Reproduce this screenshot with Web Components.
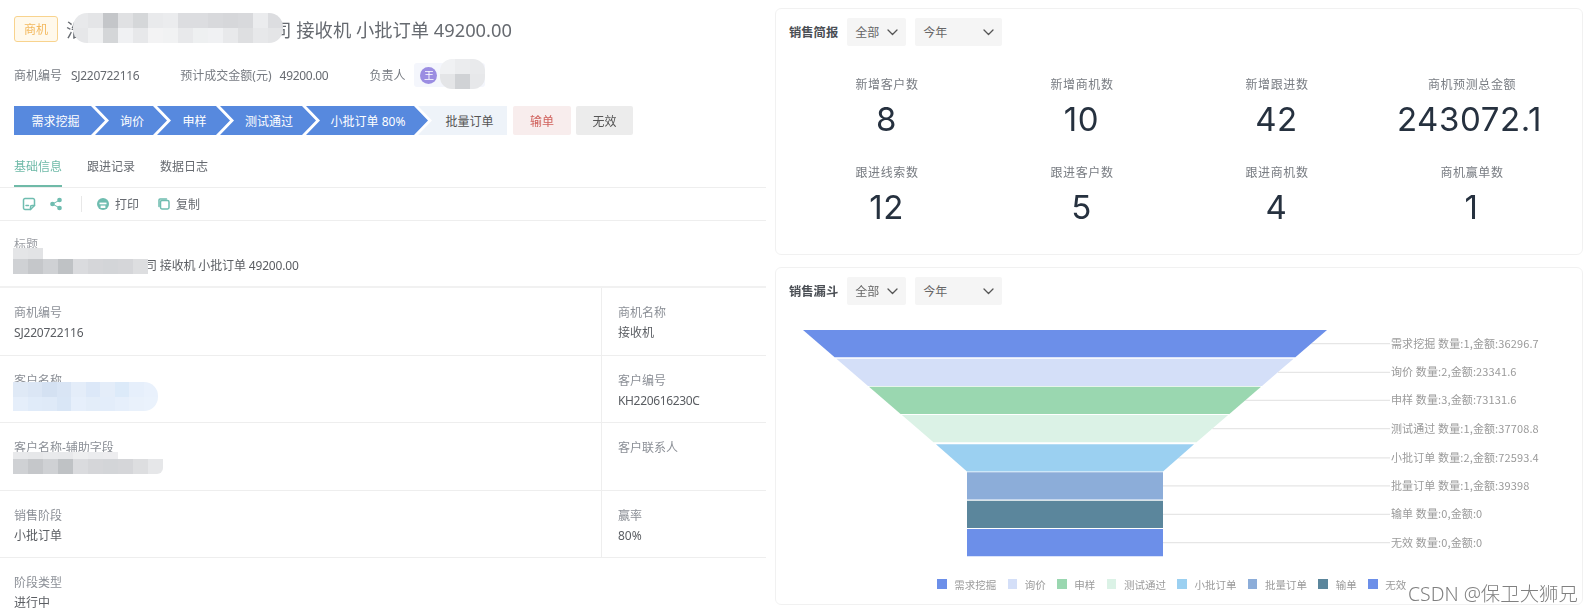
<!DOCTYPE html>
<html lang="zh-CN">
<head>
<meta charset="utf-8">
<title>商机详情与销售简报</title>
<style>
html,body{margin:0;padding:0;background:#fff;height:614px;overflow:hidden}
body{font-family:"Noto Sans","Noto Sans CJK SC",sans-serif;font-size:12px;color:#555}
</style>
</head>
<body>
<crm-page>
  <deal-detail slot="left"></deal-detail>
  <sales-brief slot="right"></sales-brief>
  <sales-funnel slot="right"></sales-funnel>
</crm-page>
<script>
const def=(name,html,init)=>customElements.define(name,class extends HTMLElement{
  constructor(){super();this.attachShadow({mode:'open'}).innerHTML=html}
  connectedCallback(){init&&init.call(this,this.shadowRoot)}
});

def('crm-page',`<style>
:host{display:grid;grid-template-columns:766px 808px;column-gap:9px;width:1594px;height:614px;overflow:hidden;filter:blur(.6px);position:relative}
.r{display:flex;flex-direction:column;gap:12px;padding-top:8px}
.wm{position:absolute;left:1408px;top:581px;font:300 19.4px "Noto Sans","Noto Sans CJK SC",sans-serif;color:#808080;white-space:nowrap;line-height:26px}
</style><div><slot name="left"></slot></div><div class="r"><slot name="right"></slot></div><div class="wm">CSDN @保卫大狮兄</div>`);

/* pixelated redaction patch */
def('mosaic-patch',`<style>
:host{display:inline-grid;vertical-align:top;overflow:hidden}
i{display:block}
</style>`,function(s){
  const c=+this.getAttribute('cell')||15,h=+this.getAttribute('rowh')||c;
  const rows=this.getAttribute('colors').split('|').map(r=>r.split(','));
  this.style.gridTemplateColumns=`repeat(${rows[0].length},${c}px)`;
  this.style.gridAutoRows=h+'px';
  rows.forEach(r=>r.forEach(k=>{const e=document.createElement('i');e.style.background=k==='-'?'transparent':'#'+k;s.appendChild(e)}));
});

def('stage-step',`<style>
:host{display:flex;align-items:center;justify-content:center;height:29px;font-size:12px;color:#fff;background:#5789de;margin-left:-10px;padding-left:2px;box-sizing:border-box;white-space:nowrap;
clip-path:polygon(0 0,calc(100% - 14px) 0,100% 50%,calc(100% - 14px) 100%,0 100%,14px 50%)}
:host([first]){margin-left:0;padding:0 8px 0 0;clip-path:polygon(0 0,calc(100% - 14px) 0,100% 50%,calc(100% - 14px) 100%,0 100%)}
:host([todo]){background:#eef3f9;color:#555;clip-path:polygon(0 0,100% 0,100% 100%,0 100%,14px 50%);padding-left:14px}
:host([lost]){margin-left:6px;background:#f8eded;color:#d0615c;clip-path:none;padding:0;border-radius:2px}
:host([void]){margin-left:5px;background:#ececec;color:#555;clip-path:none;padding:0;border-radius:2px}
</style><slot></slot>`);

def('field-cell',`<style>
:host{display:block;padding:16px 14px 0;box-sizing:border-box;min-width:0}
.l{color:#8b8f96;line-height:18px;height:18px;white-space:nowrap;letter-spacing:0}
.v{color:#5a5d62;line-height:18px;height:18px;margin-top:2px;white-space:nowrap}
</style><div class="l"></div><div class="v"><slot></slot></div>`,function(s){s.querySelector('.l').textContent=this.getAttribute('label')});

def('field-row',`<style>
:host{display:grid;grid-template-columns:601px 165px;border-bottom:1px solid #eeeeee;box-sizing:border-box;overflow:hidden}
::slotted(field-cell:nth-child(2)){border-left:1px solid #eeeeee;padding-left:16px}
</style><slot></slot>`,function(){this.style.height=this.getAttribute('h')+'px'});

def('deal-detail',`<style>
:host{display:block;width:766px;font-size:12px;position:relative}
.title{height:57px;display:flex;align-items:center;padding-left:14px;font-size:18.3px;color:#666a70;white-space:nowrap}
.tag{width:44px;height:26px;box-sizing:border-box;border:1px solid #f8d38e;border-radius:3px;background:#fff9ec;color:#f3b95f;font-size:12px;display:flex;align-items:center;justify-content:center;margin-right:8px}
.title mosaic-patch{margin:-1px 0 0 -11px;border-radius:14px;position:relative;z-index:1}
.meta{height:24px;margin-top:6px;display:flex;align-items:center;padding-left:14px;white-space:nowrap;color:#777b82}
.meta b{font-weight:400;margin-left:9px;color:#666a70;letter-spacing:-.3px}
.chip{margin-left:9px;width:71px;height:24px;background:#f4f6fc;border-radius:3px;display:flex;align-items:center;padding-left:6px;box-sizing:border-box}
.ava{width:17px;height:17px;border-radius:50%;background:#9b8de2;color:#fff;font-size:10px;line-height:17px;text-align:center}
.chip mosaic-patch{margin:-2px 0 0 3px;border-radius:12px}
.stages{display:flex;margin:19px 0 0 14px}
.tabs{height:53px;display:flex;padding-left:14px;gap:25px;border-bottom:1px solid #eeeeee;box-sizing:border-box;color:#666a70}
.tabs span{height:52px;line-height:64px;box-sizing:border-box;white-space:nowrap}
.tabs .on{color:#6fbaa8;border-bottom:2px solid #6fbaa8}
.tools{height:33px;display:flex;align-items:center;padding-left:22px;border-bottom:1px solid #eeeeee;box-sizing:border-box;color:#666a70;white-space:nowrap}
.tools svg{width:14px;height:14px;fill:none;stroke:#6fbdb0;stroke-width:1.5;stroke-linecap:round;stroke-linejoin:round;flex:none}
.sep{width:1px;height:16px;background:#e8e8e8;margin:0 14px 0 18px}
.t{margin-right:18px;margin-left:5px}
.rowt{height:67px;padding:15px 14px 0;box-sizing:border-box;border-bottom:2px solid #f1f1f1;white-space:nowrap;position:relative}
.rowt .l{color:#9a9da3;line-height:18px;height:18px}
.rowt .v{margin-top:3px;line-height:18px;height:18px;color:#5a5d62;display:flex;letter-spacing:-.15px}
.rowt mosaic-patch{position:absolute;left:13px;top:23px;clip-path:inset(4px 0 0 0)}
.rowt .v span{margin-left:131px}
.over{position:absolute;left:13px;z-index:2}
</style>
<div class="title"><span class="tag">商机</span><span>浩</span><mosaic-patch cell="15" colors="e8e9eb,e4e5e7,c4c6c9,e0e1e3,d5d7d9,e9eaec,ebecee,dcdde0,dcdde0,d8d9dc,d6d7da,d8d9dc,ebecee,dcdde0|e6e7e9,eff0f1,d4d6d8,f0f1f3,e7e8ea,f3f3f4,f1f2f3,e8e9eb,eef0f1,f0f1f3,e8e9eb,dedfe1,e7e8ea,e4e5e7"></mosaic-patch><span style="margin-left:-10px">司 接收机 小批订单 49200.00</span></div>
<div class="meta"><span>商机编号</span><b>SJ220722116</b><span style="margin-left:41px">预计成交金额(元)</span><b style="margin-left:8px">49200.00</b><span style="margin-left:41px">负责人</span>
<span class="chip"><span class="ava">王</span><mosaic-patch cell="15" colors="f0f1f3,ebecee,e9eaec|e4e5e7,d0d2d5,e7e8ea"></mosaic-patch></span></div>
<div class="stages">
<stage-step first style="width:91px">需求挖掘</stage-step>
<stage-step style="width:72px">询价</stage-step>
<stage-step style="width:73px">申样</stage-step>
<stage-step style="width:96px">测试通过</stage-step>
<stage-step style="width:122px">小批订单 80%</stage-step>
<stage-step todo style="width:89px">批量订单</stage-step>
<stage-step lost style="width:58px">输单</stage-step>
<stage-step void style="width:57px">无效</stage-step>
</div>
<div class="tabs"><span class="on">基础信息</span><span>跟进记录</span><span>数据日志</span></div>
<div class="tools">
<svg viewBox="0 0 14 14"><path d="M8.5 12.5H3a1.5 1.5 0 0 1-1.5-1.5V3A1.5 1.5 0 0 1 3 1.5h8A1.5 1.5 0 0 1 12.5 3v5.5z"/><path d="M12.5 8.5H10A1.5 1.5 0 0 0 8.5 10v2.5"/><path d="M4 8.5h2.5"/></svg>
<svg viewBox="0 0 14 14" style="margin-left:13px"><circle cx="10.5" cy="3" r="1.6" fill="#6fbdb0"/><circle cx="3.5" cy="7" r="1.6" fill="#6fbdb0"/><circle cx="10.5" cy="11" r="1.6" fill="#6fbdb0"/><path d="M10 3.5 4 6.7M4 7.3l6 3.3" stroke-width="1"/></svg>
<span class="sep"></span>
<svg viewBox="0 0 14 14"><circle cx="7" cy="7" r="6" fill="#6fbdb0" stroke="none"/><rect x="3.5" y="5.6" width="7" height="1.7" fill="#fff" stroke="none"/><rect x="4.6" y="8.6" width="4.8" height="2.4" fill="#fff" stroke="none"/></svg>
<span class="t">打印</span>
<svg viewBox="0 0 14 14"><rect x="3.5" y="3.5" width="8.5" height="8.5" rx="1.4"/><path d="M2 9.5V3a1 1 0 0 1 1-1h6.5"/></svg>
<span class="t">复制</span>
</div>
<div class="rowt"><div class="l">标题</div><div class="v"><span>司 接收机 小批订单 49200.00</span></div><mosaic-patch cell="15" colors="e4e5e7,e2e3e5,-,-,-,-,-,-,-|cfd1d4,c5c7ca,cfd1d4,bfc2c5,dadbde,d5d6d9,d3d5d8,d5d6d9,dddee0"></mosaic-patch></div>
<field-row h="68"><field-cell label="商机编号" style="letter-spacing:-.2px">SJ220722116</field-cell><field-cell label="商机名称">接收机</field-cell></field-row>
<field-row h="67"><field-cell label="客户名称"></field-cell><field-cell label="客户编号" style="letter-spacing:-.35px">KH220616230C</field-cell></field-row>
<field-row h="68"><field-cell label="客户名称-辅助字段"></field-cell><field-cell label="客户联系人"></field-cell></field-row>
<field-row h="67"><field-cell label="销售阶段">小批订单</field-cell><field-cell label="赢率">80%</field-cell></field-row>
<field-row h="57" style="border:0"><field-cell label="阶段类型">进行中</field-cell></field-row>
<mosaic-patch class="over" cell="14.5" colors="dfe9f6,dbe6f5,d4e1f2,d9e5f5,e4edf9,dce8f8,e4edf9,dceaf9,e6effb,e9f1fc|e5eefa,e0ebf9,dfeaf8,d9e6f6,e6effb,e3edf9,e3edfa,e6effb,e9f1fb,eaf2fc" style="top:382px;border-radius:0 14px 14px 0"></mosaic-patch>
<mosaic-patch class="over" cell="15" colors="e8e9eb,e6e7e9,e9eaec,e8e9eb,eeeff0,ebecee,ededef,-,-,-|cfd1d4,c5c7ca,cfd1d4,bfc2c5,dadbde,d5d6d9,d3d5d8,d5d6d9,dddee0,e6e7e9" style="top:444px;border-radius:0 6px 6px 0;clip-path:inset(8px 0 0 0)"></mosaic-patch>
`);

def('filter-select',`<style>
:host{display:flex;align-items:center;justify-content:space-between;height:28px;background:#f5f5f5;border-radius:2px;padding:0 8px;box-sizing:border-box;color:#666;font-size:12px;white-space:nowrap}
span{margin-top:-2px}
svg{width:11px;height:7px;fill:none;stroke:#555;stroke-width:1.3;stroke-linecap:round;stroke-linejoin:round}
</style><span><slot></slot></span><svg viewBox="0 0 11 7"><path d="M1 1l4.5 4.5L10 1"/></svg>`);

def('card-head',`<style>
:host{display:flex;align-items:center;gap:9px;padding-left:13px;height:28px}
b{font-weight:700;font-size:12.3px;color:#4a4e54;white-space:nowrap}
filter-select:first-of-type{width:59px}
filter-select:last-of-type{width:87px}
</style><b></b><filter-select>全部</filter-select><filter-select>今年</filter-select>`,function(s){s.querySelector('b').textContent=this.getAttribute('title')});

const cardCss=`:host{display:block;border:1px solid #f1f1f1;border-radius:6px;box-sizing:border-box;font-family:Inter,"Noto Sans CJK SC",sans-serif;padding-top:9px;background:#fff}`;

def('stat-item',`<style>
:host{display:flex;flex-direction:column;align-items:center;white-space:nowrap}
.l{font-size:12px;letter-spacing:.6px;line-height:18px;color:#787c82;font-family:"Noto Sans CJK SC",sans-serif;margin-left:-1px}
.n{font-size:33px;line-height:36px;margin-top:8px;color:#26313f;font-weight:400;letter-spacing:.6px;margin-left:-2px}
:host([wide]) .n{margin-left:-6px}
</style><div class="l"></div><div class="n"></div>`,function(s){
  s.querySelector('.l').textContent=this.getAttribute('label');
  s.querySelector('.n').textContent=this.getAttribute('value');
});

def('sales-brief',`<style>${cardCss}
:host{height:247px}
.g{display:grid;grid-template-columns:repeat(4,195px);row-gap:26px;padding:29px 14px 0}
</style><card-head title="销售简报"></card-head><div class="g">
<stat-item label="新增客户数" value="8"></stat-item>
<stat-item label="新增商机数" value="10"></stat-item>
<stat-item label="新增跟进数" value="42"></stat-item>
<stat-item label="商机预测总金额" value="243072.1" wide></stat-item>
<stat-item label="跟进线索数" value="12"></stat-item>
<stat-item label="跟进客户数" value="5"></stat-item>
<stat-item label="跟进商机数" value="4"></stat-item>
<stat-item label="商机赢单数" value="1"></stat-item>
</div>`);

def('sales-funnel',`<style>${cardCss}
:host{height:338px}
svg{display:block;margin-top:15px}
text{font:11px "Noto Sans CJK SC",sans-serif;fill:#9a9a9a;letter-spacing:.12px}
.lg{display:flex;align-items:center;height:14px;margin:7px 0 0 161px;font:10.5px "Noto Sans CJK SC",sans-serif;color:#9a9a9a;white-space:nowrap}
.lg i{width:9.5px;height:9.5px;margin-right:7.7px;flex:none}
.lg span{margin-right:11.4px}
</style><card-head title="销售漏斗"></card-head><svg width="806" height="250" viewBox="776 320 806 250"></svg><div class="lg"></div>`,function(s){
  const d=[['需求挖掘','数量:1,金额:36296.7','#6c8fe9',330],['询价','数量:2,金额:23341.6','#d4dff8',358.7],['申样','数量:3,金额:73131.6','#9ad7b0',386.7],['测试通过','数量:1,金额:37708.8','#dbf2e6',415],['小批订单','数量:2,金额:72593.4','#9bd0f1',444.3],['批量订单','数量:1,金额:39398','#8cadd9',472.3],['输单','数量:0,金额:0','#5b869c',500.7],['无效','数量:0,金额:0','#6c8fe9',529]];
  const hw=y=>Math.max(98,262-1.163*(y-330));
  let h='',lg='';
  d.forEach(([n,v,c,t])=>{
    const b=t+27.2,m=t+13.6,cx=1065;
    h+=`<line x1="${cx+hw(m)}" y1="${m}" x2="1390" y2="${m}" stroke="#e6e6e6" stroke-width="1.2"/>`;
    h+=`<polygon fill="${c}" points="${cx-hw(t)},${t} ${cx+hw(t)},${t} ${cx+hw(b)},${b} ${cx-hw(b)},${b}"/>`;
    h+=`<text x="1391" y="${m+4}">${n} ${v}</text>`;
    lg+=`<i style="background:${c}"></i><span>${n}</span>`;
  });
  s.querySelector('svg').innerHTML=h;
  s.querySelector('.lg').innerHTML=lg;
});
</script>
</body>
</html>
